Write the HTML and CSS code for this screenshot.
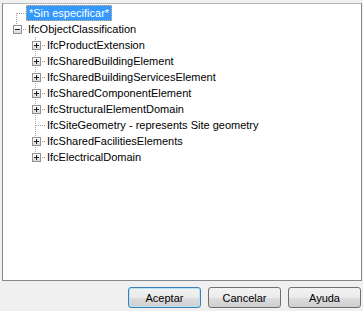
FILE: index.html
```html
<!DOCTYPE html>
<html lang="es">
<head>
    <meta charset="UTF-8">
    <title>Clasificación</title>
    <link rel="stylesheet" href="styles.css">
</head>
<body>
    <div class="tree">
        <!-- raíz 1 -->
        <div class="row">
            <span class="cell first"></span>
            <span class="label selected">*Sin especificar*</span>
        </div>
        <!-- raíz 2 -->
        <div class="row">
            <span class="cell last"><span class="box minus"></span></span>
            <span class="label">IfcObjectClassification</span>
        </div>
        <div class="row">
            <span class="cell"></span>
            <span class="cell tee"><span class="box plus"></span></span>
            <span class="label">IfcProductExtension</span>
        </div>
        <div class="row">
            <span class="cell"></span>
            <span class="cell tee"><span class="box plus"></span></span>
            <span class="label">IfcSharedBuildingElement</span>
        </div>
        <div class="row">
            <span class="cell"></span>
            <span class="cell tee"><span class="box plus"></span></span>
            <span class="label">IfcSharedBuildingServicesElement</span>
        </div>
        <div class="row">
            <span class="cell"></span>
            <span class="cell tee"><span class="box plus"></span></span>
            <span class="label">IfcSharedComponentElement</span>
        </div>
        <div class="row">
            <span class="cell"></span>
            <span class="cell tee"><span class="box plus"></span></span>
            <span class="label">IfcStructuralElementDomain</span>
        </div>
        <div class="row">
            <span class="cell"></span>
            <span class="cell tee"></span>
            <span class="label">IfcSiteGeometry - represents Site geometry</span>
        </div>
        <div class="row">
            <span class="cell"></span>
            <span class="cell tee"><span class="box plus"></span></span>
            <span class="label">IfcSharedFacilitiesElements</span>
        </div>
        <div class="row">
            <span class="cell"></span>
            <span class="cell last"><span class="box plus"></span></span>
            <span class="label">IfcElectricalDomain</span>
        </div>
    </div>

    <div class="buttons">
        <button class="btn default">Aceptar</button>
        <button class="btn">Cancelar</button>
        <button class="btn">Ayuda</button>
    </div>
</body>
</html>
```

FILE: styles.css
```css
body {
    margin: 0;
    background-color: #f0f0f0;
    font-family: "Liberation Sans", Arial, sans-serif;
    font-size: 11px;
    color: #000;
}

/* panel del árbol */
.tree {
    box-sizing: border-box;
    height: 278px;
    margin: 3px 1px 0 2px;
    padding: 1px 0 0 4px;
    background-color: #fff;
    border: 1px solid #828790;
    border-top-color: #b5b5b5;
}
.row {
    display: flex;
    align-items: center;
    height: 16px;
}
.cell {
    display: flex;
    align-items: center;
    justify-content: center;
    width: 19px;
    height: 16px;
    flex: none;
    background-repeat: no-repeat;
}

/* líneas punteadas */
.cell.tee {
    background-image:
        repeating-linear-gradient(to bottom, #a0a0a0 0 1px, transparent 1px 2px),
        repeating-linear-gradient(to right, #a0a0a0 0 1px, transparent 1px 2px);
    background-size: 1px 16px, 9px 1px;
    background-position: 9px 0, 10px 8px;
}
.cell.last {
    background-image:
        repeating-linear-gradient(to bottom, #a0a0a0 0 1px, transparent 1px 2px),
        repeating-linear-gradient(to right, #a0a0a0 0 1px, transparent 1px 2px);
    background-size: 1px 9px, 9px 1px;
    background-position: 9px 0, 10px 8px;
}
.cell.first {
    background-image:
        repeating-linear-gradient(to bottom, #a0a0a0 0 1px, transparent 1px 2px),
        repeating-linear-gradient(to right, #a0a0a0 0 1px, transparent 1px 2px);
    background-size: 1px 8px, 9px 1px;
    background-position: 9px 8px, 10px 8px;
}

/* cajas + / - */
.box {
    box-sizing: border-box;
    display: flex;
    align-items: center;
    justify-content: center;
    width: 9px;
    height: 9px;
    margin-left: 1px;
    margin-top: 1px;
    border: 1px solid #919191;
    background: linear-gradient(#ffffff, #d9d9d9);
}
.box::before {
    content: "";
    width: 5px;
    height: 1px;
    background-color: #1c1c1c;
}
.box.plus {
    background:
        linear-gradient(#1c1c1c, #1c1c1c) center / 1px 5px no-repeat,
        linear-gradient(#ffffff, #d9d9d9);
}

.label {
    box-sizing: border-box;
    height: 16px;
    line-height: 14px;
    padding: 0 1px;
    border: 1px solid transparent;
    white-space: nowrap;
}
.label.selected {
    padding: 0 2px;
    background-color: #3399ff;
    color: #fff;
    border: 1px dotted #e8b070;
}

/* botones */
.buttons {
    display: flex;
    justify-content: flex-end;
    gap: 7px;
    padding: 6px 2px 0 0;
}
.btn {
    box-sizing: border-box;
    width: 73px;
    height: 21px;
    padding: 0;
    font-family: "Liberation Sans", Arial, sans-serif;
    font-size: 11px;
    color: #000;
    border: 1px solid #707070;
    border-radius: 3px;
    background: linear-gradient(#f2f2f2 0, #ebebeb 50%, #dddddd 50%, #cfcfcf 100%);
}
.btn.default {
    border-color: #3c7fb1;
    box-shadow: inset 0 0 0 1px #b6e3f8;
}
```
